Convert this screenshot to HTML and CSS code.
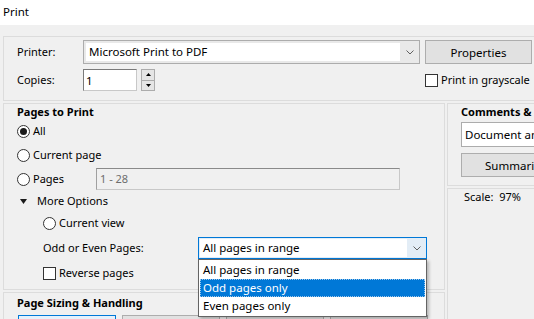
FILE: index.html
```html
<!DOCTYPE html>
<html lang="en">
<head>
    <meta charset="UTF-8">
    <title>Print</title>
    <link rel="stylesheet" href="styles.css">
</head>
<body>

    <div class="titlebar">Print</div>

    <div class="dialog">

        <div class="panel printer-box">
            <span class="field-label">Printer:</span>
            <div class="combo">
                <span class="combo-text">Microsoft Print to PDF</span>
                <span class="combo-arrow">
                    <svg width="8" height="5" viewBox="0 0 8 5"><polyline points="0.5,0.5 4,4 7.5,0.5" fill="none" stroke="#606060" stroke-width="1"/></svg>
                </span>
            </div>
            <button class="btn">Properties</button>

            <span class="field-label">Copies:</span>
            <div class="copies">
                <input class="copies-input" type="text" value="1">
                <div class="spinner">
                    <span class="spin-btn"><svg width="5" height="3" viewBox="0 0 5 3"><polygon points="2.5,0 5,3 0,3" fill="#000"/></svg></span>
                    <span class="spin-btn"><svg width="5" height="3" viewBox="0 0 5 3"><polygon points="0,0 5,0 2.5,3" fill="#000"/></svg></span>
                </div>
            </div>
            <label class="check"><span class="box"></span>Print in grayscale</label>
        </div>

        <div class="columns">
            <div class="col-left">
                <div class="panel pages">
                    <h2 class="panel-title">Pages to Print</h2>
                    <div class="row"><span class="radio checked"></span>All</div>
                    <div class="row"><span class="radio"></span>Current page</div>
                    <div class="row">
                        <span class="pages-label"><span class="radio"></span>Pages</span>
                        <span class="range-input">1 - 28</span>
                    </div>
                    <div class="row more">
                        <svg width="7" height="5" viewBox="0 0 7 5"><polygon points="0,0 7,0 3.5,5" fill="#1a1a1a"/></svg>
                        <span>More Options</span>
                    </div>
                    <div class="row indent"><span class="radio"></span>Current view</div>
                    <div class="row indent odd-row">
                        <span class="odd-label">Odd or Even Pages:</span>
                        <div class="combo combo-open">
                            <span class="combo-text">All pages in range</span>
                            <span class="combo-arrow">
                                <svg width="8" height="5" viewBox="0 0 8 5"><polyline points="0.5,0.5 4,4 7.5,0.5" fill="none" stroke="#606060" stroke-width="1"/></svg>
                            </span>
                            <ul class="dropdown">
                                <li>All pages in range</li>
                                <li class="selected">Odd pages only</li>
                                <li>Even pages only</li>
                            </ul>
                        </div>
                    </div>
                    <label class="row indent check"><span class="box"></span>Reverse pages</label>
                </div>

                <div class="panel sizing">
                    <h2 class="panel-title">Page Sizing &amp; Handling</h2>
                    <div class="mode-buttons">
                        <span class="mode active"></span>
                        <span class="mode"></span>
                        <span class="mode"></span>
                        <span class="mode"></span>
                    </div>
                </div>
            </div>

            <div class="col-right">
                <div class="panel comments">
                    <h2 class="panel-title">Comments &amp;</h2>
                    <div class="doc-select">Document and Markups</div>
                    <button class="btn summ">Summarize Comments</button>
                </div>
                <div class="panel scale">Scale:&nbsp; 97%</div>
            </div>
        </div>

    </div>

</body>
</html>
```

FILE: styles.css
```css
* {
    box-sizing: border-box;
}

body {
    margin: 0;
    width: 534px;
    height: 319px;
    overflow: hidden;
    background-color: #f0f0f0;
    font-family: "Noto Sans", "Liberation Sans", sans-serif;
    font-size: 11px;
    line-height: 16px;
    color: #000;
}

.titlebar {
    height: 25px;
    padding: 4px 0 0 3px;
    background-color: #fff;
    font-size: 11.5px;
}

.dialog {
    width: 531px;
    margin-left: 3px;
    padding-top: 11px;
    overflow: hidden;
}

.panel {
    border: 1px solid #dcdcdc;
}

.panel-title {
    margin: 0;
    font-size: 11px;
    font-weight: bold;
    line-height: 15px;
    white-space: nowrap;
}

/* printer block */
.printer-box {
    display: grid;
    grid-template-columns: 61px 337px 107px;
    grid-template-rows: 24px 22px;
    column-gap: 5px;
    row-gap: 5px;
    width: 560px;
    height: 65px;
    padding: 3px 0 0 13px;
    align-items: center;
}

.field-label {
    line-height: 16px;
}

.combo {
    position: relative;
    display: flex;
    height: 24px;
    border: 1px solid #acacac;
    background-color: #e9e9e9;
    padding: 2px 0 2px 2px;
}

.combo-text {
    flex: 1;
    background-color: #fff;
    padding: 0 3px;
    line-height: 18px;
    font-size: 11.5px;
    white-space: nowrap;
}

.combo-arrow {
    width: 19px;
    display: flex;
    align-items: center;
    justify-content: center;
}

.btn {
    height: 24px;
    border: 1px solid #adadad;
    background-color: #e1e1e1;
    font-family: inherit;
    font-size: 11.5px;
    padding: 0;
    color: #000;
    white-space: nowrap;
}

.copies {
    display: flex;
    align-items: center;
}

.copies-input {
    width: 54px;
    height: 22px;
    margin: 0;
    padding: 0 2px;
    border: 1px solid #7a7a7a;
    border-color: #7a7a7a #c8c8c8 #c8c8c8 #7a7a7a;
    font-family: inherit;
    font-size: 11.5px;
    outline: none;
}

.spinner {
    display: flex;
    flex-direction: column;
    margin-left: 4px;
    width: 14px;
    height: 22px;
}

.spin-btn {
    flex: 1;
    display: flex;
    align-items: center;
    justify-content: center;
    border: 1px solid #acacac;
    background-color: #e5e5e5;
}

.spin-btn + .spin-btn {
    border-top: none;
}

.check {
    display: flex;
    align-items: center;
    white-space: nowrap;
}

.box {
    width: 13px;
    height: 13px;
    margin-right: 3px;
    border: 1px solid #333;
    background-color: #fff;
}

/* columns */
.columns {
    display: flex;
    gap: 2px;
    width: 680px;
    margin-top: 2px;
}

.col-left {
    flex: none;
    width: 442px;
}

.col-right {
    flex: 1;
}

.pages {
    height: 187px;
    padding: 0 0 0 13px;
}

.row {
    display: flex;
    align-items: center;
    height: 24px;
}

.radio {
    position: relative;
    width: 13px;
    height: 13px;
    margin-right: 3px;
    border: 1px solid #333;
    border-radius: 50%;
    background-color: #fff;
}

.radio.checked::after {
    content: "";
    position: absolute;
    left: 2px;
    top: 2px;
    width: 7px;
    height: 7px;
    border-radius: 50%;
    background-color: #1a1a1a;
}

.pages-label {
    display: flex;
    align-items: center;
    width: 79px;
}

.range-input {
    width: 304px;
    height: 22px;
    padding: 0 3px;
    line-height: 20px;
    border: 1px solid #c8c8c8;
    border-top-color: #8a8a8a;
    border-left-color: #a0a0a0;
    color: #6d6d6d;
}

.row.more {
    height: 20px;
    padding-left: 3px;
}

.more svg {
    margin-right: 10px;
}

.indent {
    padding-left: 26px;
}

.row.odd-row {
    height: 26px;
}

.odd-label {
    width: 155px;
}

.combo-open {
    width: 229px;
    height: 22px;
    border-color: #0078d7;
    background-color: #e3edf6;
    padding: 1px 0 1px 1px;
}

.combo-open .combo-text {
    line-height: 18px;
}

.dropdown {
    position: absolute;
    left: -1px;
    top: 21px;
    width: 229px;
    margin: 0;
    padding: 1px;
    list-style: none;
    background-color: #fff;
    border: 1px solid #646464;
    box-shadow: 2px 2px 3px rgba(0, 0, 0, 0.25);
    z-index: 2;
}

.dropdown li {
    height: 18px;
    padding: 0 3px;
    line-height: 18px;
    font-size: 11.5px;
}

.dropdown .selected {
    background-color: #0078d7;
    color: #fff;
    outline: 1px dotted #9cc6ea;
    outline-offset: -1px;
}

.sizing {
    margin-top: 2px;
    height: 60px;
    padding: 0 0 0 13px;
}

.sizing .panel-title {
    line-height: 20px;
}

.mode-buttons {
    display: flex;
    gap: 6px;
    margin-top: 2px;
    margin-left: 1px;
}

.mode {
    width: 98px;
    height: 40px;
    border: 1px solid #adadad;
    background-color: #e1e1e1;
}

.mode.active {
    border-color: #0078d7;
    background-color: #e5f1fb;
}

/* right column */
.comments {
    height: 83px;
    padding: 0 0 0 13px;
}

.doc-select {
    width: 180px;
    height: 25px;
    margin-top: 3px;
    padding: 0 3px;
    line-height: 23px;
    border: 1px solid #acacac;
    background-color: #fff;
    font-size: 11.5px;
    white-space: nowrap;
}

.summ {
    width: 171px;
    margin-top: 6px;
}

.scale {
    margin-top: 2px;
    height: 140px;
    padding: 0 0 0 16px;
    line-height: 16px;
}
```
